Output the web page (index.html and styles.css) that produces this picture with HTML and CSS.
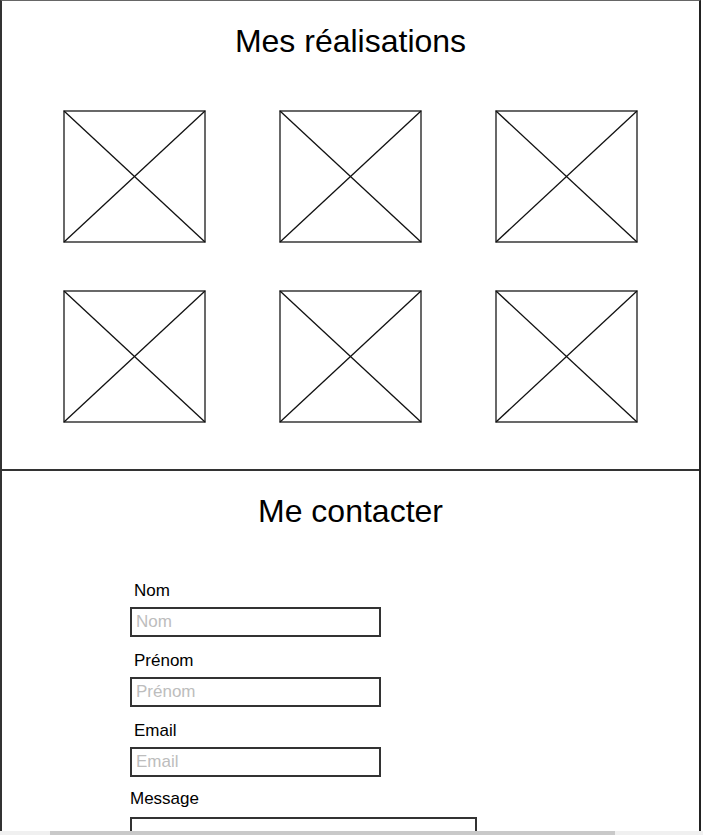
FILE: index.html
```html
<!DOCTYPE html>
<html lang="fr">
<head>
  <meta charset="UTF-8" />
  <title>Portfolio</title>
  <link rel="stylesheet" href="styles.css">
</head>
<body>

  <div class="page">

    <section class="works">
      <h1>Mes réalisations</h1>

      <div class="gallery">
        <svg class="thumb" viewBox="0 0 143 133" preserveAspectRatio="none">
          <rect x="1" y="1" width="141" height="131" />
          <line x1="1" y1="1" x2="142" y2="132" />
          <line x1="142" y1="1" x2="1" y2="132" />
        </svg>
        <svg class="thumb" viewBox="0 0 143 133" preserveAspectRatio="none">
          <rect x="1" y="1" width="141" height="131" />
          <line x1="1" y1="1" x2="142" y2="132" />
          <line x1="142" y1="1" x2="1" y2="132" />
        </svg>
        <svg class="thumb" viewBox="0 0 143 133" preserveAspectRatio="none">
          <rect x="1" y="1" width="141" height="131" />
          <line x1="1" y1="1" x2="142" y2="132" />
          <line x1="142" y1="1" x2="1" y2="132" />
        </svg>
        <svg class="thumb" viewBox="0 0 143 133" preserveAspectRatio="none">
          <rect x="1" y="1" width="141" height="131" />
          <line x1="1" y1="1" x2="142" y2="132" />
          <line x1="142" y1="1" x2="1" y2="132" />
        </svg>
        <svg class="thumb" viewBox="0 0 143 133" preserveAspectRatio="none">
          <rect x="1" y="1" width="141" height="131" />
          <line x1="1" y1="1" x2="142" y2="132" />
          <line x1="142" y1="1" x2="1" y2="132" />
        </svg>
        <svg class="thumb" viewBox="0 0 143 133" preserveAspectRatio="none">
          <rect x="1" y="1" width="141" height="131" />
          <line x1="1" y1="1" x2="142" y2="132" />
          <line x1="142" y1="1" x2="1" y2="132" />
        </svg>
      </div>
    </section>

    <section class="contact">
      <h1>Me contacter</h1>

      <form class="contact-form">
        <label for="nom" class="indent">Nom</label>
        <input type="text" id="nom" placeholder="Nom" />

        <label for="prenom" class="indent">Prénom</label>
        <input type="text" id="prenom" placeholder="Prénom" />

        <label for="email" class="indent">Email</label>
        <input type="text" id="email" placeholder="Email" />

        <label for="message" class="msg-label">Message</label>
        <textarea id="message"></textarea>
      </form>
    </section>

  </div>

  <div class="hscroll"><div class="hscroll-thumb"></div></div>

</body>
</html>
```

FILE: styles.css
```css
body {
  margin: 0;
  background-color: #ffffff;
  color: #000000;
  font-family: "Liberation Sans", Arial, sans-serif;
}

.page {
  width: 701px;
  box-sizing: border-box;
  border-left: 2px solid #333;
  border-right: 2px solid #222;
  border-top: 1px solid #666;
}

h1 {
  margin: 0;
  font-size: 32px;
  font-weight: normal;
  line-height: 37px;
  text-align: center;
}

.works {
  padding-top: 22px;
  padding-bottom: 46px;
  border-bottom: 2px solid #333;
}

.gallery {
  display: grid;
  grid-template-columns: repeat(3, 216px);
  justify-content: center;
  justify-items: center;
  row-gap: 47px;
  margin-top: 50px;
}

.thumb {
  display: block;
  width: 143px;
  height: 133px;
}

.thumb rect {
  fill: none;
  stroke: #444;
  stroke-width: 1.6;
}

.thumb line {
  stroke: #111;
  stroke-width: 1.3;
}

.contact {
  padding-top: 22px;
  height: 400px;
}

.contact-form {
  margin-top: 51px;
  padding-left: 128px;
}

label {
  display: block;
  font-size: 17px;
  line-height: 20px;
  margin-bottom: 6px;
}

label.indent {
  padding-left: 4px;
}

label.msg-label {
  margin-top: -2px;
  margin-bottom: 8px;
}

input[type="text"] {
  display: block;
  box-sizing: border-box;
  width: 251px;
  height: 30px;
  margin: 0 0 14px 0;
  padding: 0 4px;
  font-family: "Liberation Sans", Arial, sans-serif;
  font-size: 17px;
  border: 2px solid #333;
  border-radius: 0;
  outline: none;
}

input::placeholder {
  color: #bdbdbd;
}

textarea {
  display: block;
  box-sizing: border-box;
  width: 347px;
  height: 60px;
  margin: 0;
  border: 2px solid #333;
  border-radius: 0;
  resize: none;
}

.hscroll {
  position: fixed;
  left: 0;
  right: 0;
  bottom: 0;
  height: 4px;
  background-color: #f0f0f0;
}

.hscroll-thumb {
  margin-left: 50px;
  width: 565px;
  height: 4px;
  background-color: #c9c9c9;
}
```
